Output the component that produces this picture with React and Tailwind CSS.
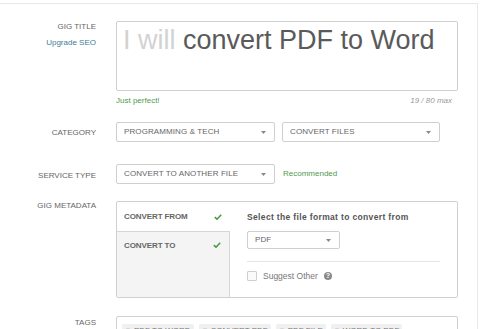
import React from "react";

function Arrow() {
  return (
    <svg width="5" height="3" viewBox="0 0 5 3" className="shrink-0">
      <path d="M0 0 L5 0 L2.5 3 Z" fill="#888" />
    </svg>
  );
}

function Select({ label, className }) {
  return (
    <div className={"flex items-center justify-between border border-[#cfcfcf] rounded-[2px] bg-white pl-[7px] pr-[8px] " + className}>
      <span className="text-[8px] leading-none text-[#666] tracking-[0.1px]">{label}</span>
      <Arrow />
    </div>
  );
}

function Check() {
  return (
    <svg width="8" height="6" viewBox="0 0 8 6">
      <path d="M0.8 3.2 L3 5.2 L7.2 0.8" stroke="#4a9a4a" strokeWidth="1.6" fill="none" />
    </svg>
  );
}

function Tag({ label }) {
  return (
    <div className="flex items-center gap-[3px] h-[14px] bg-[#f0f0f0] rounded-[2px] px-[3px]">
      <span className="w-[6px] h-[6px] rounded-full bg-[#d4d4d4] inline-block" />
      <span className="text-[8px] leading-none text-[#777]">{label}</span>
    </div>
  );
}

function Label({ children, className = "" }) {
  return (
    <div className={"w-[96px] shrink-0 text-right text-[8px] leading-[11px] text-[#666] " + className}>
      {children}
    </div>
  );
}

export default function App() {
  return (
    <div className="w-[480px] h-[329px] overflow-hidden bg-white font-['Liberation_Sans',Arial,sans-serif]">
      <div className="mt-[3px] w-[478px] h-[400px] border-t border-r border-[#e8e8e8] pt-[17px]">
        {/* GIG TITLE */}
        <div className="flex gap-[20px]">
          <Label>
            <div>GIG TITLE</div>
            <div className="mt-[5px] text-[#3f7d96]">Upgrade SEO</div>
          </Label>
          <div className="w-[342px]">
            <div className="h-[70px] border border-[#d0d0d0] rounded-[2px] pl-[6px] pt-[3px]">
              <span className="text-[27px] leading-[31px] text-[#d2d2d2]">I will </span>
              <span className="text-[27px] leading-[31px] text-[#5a5a5a]">convert PDF to Word</span>
            </div>
            <div className="mt-[4px] flex justify-between text-[8px] leading-[11px]">
              <span className="text-[#4f9a4f]">Just perfect!</span>
              <span className="italic text-[#999] pr-[6px]">19 / 80 max</span>
            </div>
          </div>
        </div>

        {/* CATEGORY */}
        <div className="mt-[16px] flex items-center gap-[20px]">
          <Label className="pt-[1px]">CATEGORY</Label>
          <div className="flex gap-[7px]">
            <Select label="PROGRAMMING & TECH" className="w-[159px] h-[20px]" />
            <Select label="CONVERT FILES" className="w-[158px] h-[20px]" />
          </div>
        </div>

        {/* SERVICE TYPE */}
        <div className="mt-[22px] flex items-center gap-[20px]">
          <Label className="pt-[2px]">SERVICE TYPE</Label>
          <div className="flex items-center gap-[8px]">
            <Select label="CONVERT TO ANOTHER FILE" className="w-[159px] h-[20px]" />
            <span className="text-[8px] leading-none text-[#4f9a4f]">Recommended</span>
          </div>
        </div>

        {/* GIG METADATA */}
        <div className="mt-[17px] flex gap-[20px]">
          <Label className="-mt-[1px]">GIG METADATA</Label>
          <div className="w-[342px] h-[97px] border border-[#d0d0d0] rounded-[2px] flex overflow-hidden">
            <div className="w-[113px] shrink-0 flex flex-col">
              <div className="h-[29px] flex items-center justify-between pl-[7px] pr-[8px]">
                <span className="text-[8px] leading-none text-[#666] font-bold tracking-[-0.1px]">CONVERT FROM</span>
                <Check />
              </div>
              <div className="flex-1 bg-[#f4f4f4] border-t border-r border-[#d6d6d6] flex items-start justify-between pl-[7px] pr-[8px] pt-[10px]">
                <span className="text-[8px] leading-none text-[#666] font-bold tracking-[-0.1px]">CONVERT TO</span>
                <Check />
              </div>
            </div>
            <div className="flex-1 pl-[17px] pr-[17px] pt-[10px]">
              <div className="text-[8.5px] leading-[10px] font-bold text-[#555] tracking-[0.35px]">
                Select the file format to convert from
              </div>
              <Select label="PDF" className="mt-[9px] w-[93px] h-[18px]" />
              <div className="mt-[12px] h-px bg-[#e6e6e6]" />
              <div className="mt-[9px] flex items-center gap-[6px]">
                <span className="w-[10px] h-[10px] border border-[#cfcfcf] rounded-[1px] bg-[#fafafa] inline-block" />
                <span className="text-[8.5px] leading-none text-[#777]">Suggest Other</span>
                <svg width="8" height="8" viewBox="0 0 8 8">
                  <circle cx="4" cy="4" r="4" fill="#8a8a8a" />
                  <text x="4" y="6.4" textAnchor="middle" fontSize="6.5" fontWeight="bold" fill="#fff" fontFamily="Liberation Sans, Arial, sans-serif">?</text>
                </svg>
              </div>
            </div>
          </div>
        </div>

        {/* TAGS */}
        <div className="mt-[18px] flex gap-[20px]">
          <Label className="pt-[1px]">TAGS</Label>
          <div className="w-[342px] h-[40px] border border-[#d0d0d0] rounded-[2px] pl-[5px] pt-[7px] flex gap-[5px] items-start">
            <Tag label="PDF TO WORD" />
            <Tag label="CONVERT PDF" />
            <Tag label="PDF FILE" />
            <Tag label="WORD TO PDF" />
          </div>
        </div>
      </div>
    </div>
  );
}
